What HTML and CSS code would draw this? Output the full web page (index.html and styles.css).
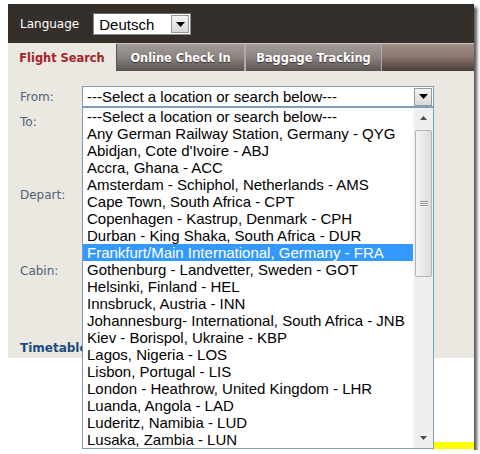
FILE: index.html
```html
<!DOCTYPE html>
<html>
<head>
<meta charset="utf-8">
<link rel="stylesheet" href="styles.css">
</head>
<body>
<div class="frame">
  <div class="header">
    <span class="lang-label">Language</span>
    <div class="select lang-select">
      <span class="select-text">Deutsch</span>
      <span class="select-btn"><svg width="9" height="5" viewBox="0 0 9 5"><path d="M0 0h9L4.5 5z" fill="#000"/></svg></span>
    </div>
  </div>
  <div class="tabbar">
    <div class="tab active">Flight Search</div>
    <div class="tab t-checkin">Online Check In</div>
    <div class="tab t-baggage">Baggage Tracking</div>
  </div>
  <div class="form">
    <div class="row row-from">
      <span class="label">From:</span>
      <div class="select from-select">
        <span class="select-text">---Select a location or search below---</span>
        <span class="select-btn"><svg width="9" height="5" viewBox="0 0 9 5"><path d="M0 0h9L4.5 5z" fill="#000"/></svg></span>
      </div>
    </div>
    <div class="row row-to"><span class="label">To:</span></div>
    <div class="row row-depart"><span class="label">Depart:</span></div>
    <div class="row row-cabin"><span class="label">Cabin:</span></div>
    <div class="row row-time"><span class="label timetable">Timetable</span></div>
  </div>
  <div class="bottom">
    <div class="yellow"></div>
  </div>
  <div class="dropdown">
    <ul class="options">
      <li>---Select a location or search below---</li>
      <li>Any German Railway Station, Germany - QYG</li>
      <li>Abidjan, Cote d'Ivoire - ABJ</li>
      <li>Accra, Ghana - ACC</li>
      <li>Amsterdam - Schiphol, Netherlands - AMS</li>
      <li>Cape Town, South Africa - CPT</li>
      <li>Copenhagen - Kastrup, Denmark - CPH</li>
      <li>Durban - King Shaka, South Africa - DUR</li>
      <li class="sel">Frankfurt/Main International, Germany - FRA</li>
      <li>Gothenburg - Landvetter, Sweden - GOT</li>
      <li>Helsinki, Finland - HEL</li>
      <li>Innsbruck, Austria - INN</li>
      <li>Johannesburg- International, South Africa - JNB</li>
      <li>Kiev - Borispol, Ukraine - KBP</li>
      <li>Lagos, Nigeria - LOS</li>
      <li>Lisbon, Portugal - LIS</li>
      <li>London - Heathrow, United Kingdom - LHR</li>
      <li>Luanda, Angola - LAD</li>
      <li>Luderitz, Namibia - LUD</li>
      <li>Lusaka, Zambia - LUN</li>
    </ul>
    <div class="scrollbar">
      <span class="sb-arrow"><svg width="7" height="4" viewBox="0 0 7 4"><path d="M0 4h7L3.5 0z" fill="#4d4d4d"/></svg></span>
      <div class="sb-track">
        <div class="sb-thumb"><span class="grip"></span><span class="grip"></span><span class="grip"></span></div>
      </div>
      <span class="sb-arrow"><svg width="7" height="4" viewBox="0 0 7 4"><path d="M0 0h7L3.5 4z" fill="#4d4d4d"/></svg></span>
    </div>
  </div>
</div>
</body>
</html>
```
FILE: styles.css
```css
html, body {
  margin: 0;
  padding: 0;
  background: #ffffff;
}
.frame {
  position: relative;
  margin: 4px 0 0 8px;
  width: 466px;
  height: 446px;
  background: #ffffff;
  box-shadow: 3px 3px 3px rgba(0,0,0,0.65);
  font-family: "DejaVu Sans", Verdana, sans-serif;
}
.header {
  height: 39px;
  background: #352f2c;
  display: flex;
  align-items: center;
  padding-left: 12px;
  box-sizing: border-box;
}
.lang-label {
  color: #ffffff;
  font-size: 12px;
  margin-right: 14px;
  margin-top: 1px;
}
.select {
  background: #ffffff;
  display: flex;
  align-items: center;
  box-sizing: border-box;
  font-family: "Liberation Sans", Arial, sans-serif;
  font-size: 15px;
  color: #000;
}
.lang-select {
  width: 98px;
  height: 22px;
  border: 1px solid #8a8a8a;
  border-top-color: #6a6a6a;
  padding-left: 5px;
  margin-top: 1px;
}
.select-text {
  flex: 1;
  white-space: nowrap;
  overflow: hidden;
}
.select-btn {
  width: 18px;
  height: 18px;
  margin-right: 1px;
  box-sizing: border-box;
  border: 1px solid #9a9a9a;
  background: linear-gradient(#f4f4f4, #d8d8d8);
  display: flex;
  align-items: center;
  justify-content: center;
}
.tabbar {
  height: 28px;
  display: flex;
  background: linear-gradient(#a08e86 0%, #8d7a72 45%, #4c3e39 100%);
  border-top: 1px solid #cbc3be;
  box-sizing: border-box;
}
.tab {
  font-size: 11.4px;
  font-weight: bold;
  display: flex;
  align-items: center;
  justify-content: center;
  box-sizing: border-box;
  color: #ffffff;
  text-shadow: 0 1px 1px #3a302c;
  padding-top: 1px;
}
.tab.active {
  width: 108px;
  background: #ebe7e1;
  color: #a5242c;
  text-shadow: none;
  margin-top: -1px;
}
.t-checkin, .t-baggage {
  background: linear-gradient(#a39c99 0%, #8b8380 50%, #5a5250 100%);
  border-left: 1px solid #5a524f;
  border-right: 1px solid #b2aaa6;
}
.t-checkin { width: 129px; }
.t-baggage { width: 137px; border-left-color: #b2aaa6; }
.form {
  height: 287px;
  background: #ebe7e1;
  box-sizing: border-box;
  padding: 15px 12px 0 12px;
}
.row {
  display: flex;
  align-items: center;
}
.label {
  color: #506277;
  font-size: 12px;
  width: 62px;
}
.from-select {
  width: 352px;
  height: 21px;
  border: 1px solid #7f9db9;
  padding-left: 4px;
}
.row-to { margin-top: 7px; height: 16px; }
.row-depart { margin-top: 57px; height: 16px; }
.row-cabin { margin-top: 60px; height: 16px; }
.row-time { margin-top: 61px; height: 16px; }
.timetable {
  color: #1b4c80;
  font-weight: bold;
  width: auto;
}
.bottom {
  height: 92px;
  position: relative;
}
.yellow {
  position: absolute;
  left: 142px;
  right: 0;
  top: 84px;
  height: 7px;
  background: #ffff00;
}
.dropdown {
  position: absolute;
  left: 74px;
  top: 103px;
  width: 352px;
  height: 342px;
  box-sizing: border-box;
  border: 1px solid #7f9db9;
  background: #ffffff;
  display: flex;
}
.options {
  list-style: none;
  margin: 0;
  padding: 0;
  width: 330px;
  font-family: "Liberation Sans", Arial, sans-serif;
  font-size: 15px;
  color: #000;
}
.options li {
  height: 17px;
  line-height: 17px;
  padding-left: 4px;
  white-space: nowrap;
}
.options li.sel {
  background: #3399ff;
  color: #ffffff;
}
.scrollbar {
  width: 20px;
  background: #efefef;
  display: flex;
  flex-direction: column;
  border-left: 1px solid #f8f8f8;
  box-sizing: border-box;
}
.sb-arrow {
  height: 20px;
  display: flex;
  align-items: center;
  justify-content: center;
}
.sb-track {
  flex: 1;
  padding-top: 2px;
}
.sb-thumb {
  height: 147px;
  margin: 0 1px;
  box-sizing: border-box;
  border: 1px solid #b4b4b4;
  border-radius: 2px;
  background: linear-gradient(90deg, #f4f4f4, #dcdcdc);
  display: flex;
  flex-direction: column;
  align-items: center;
  justify-content: center;
  gap: 1px;
}
.grip {
  width: 8px;
  height: 1px;
  background: #8c8c8c;
  box-shadow: 0 1px 0 #ffffff;
}
```
